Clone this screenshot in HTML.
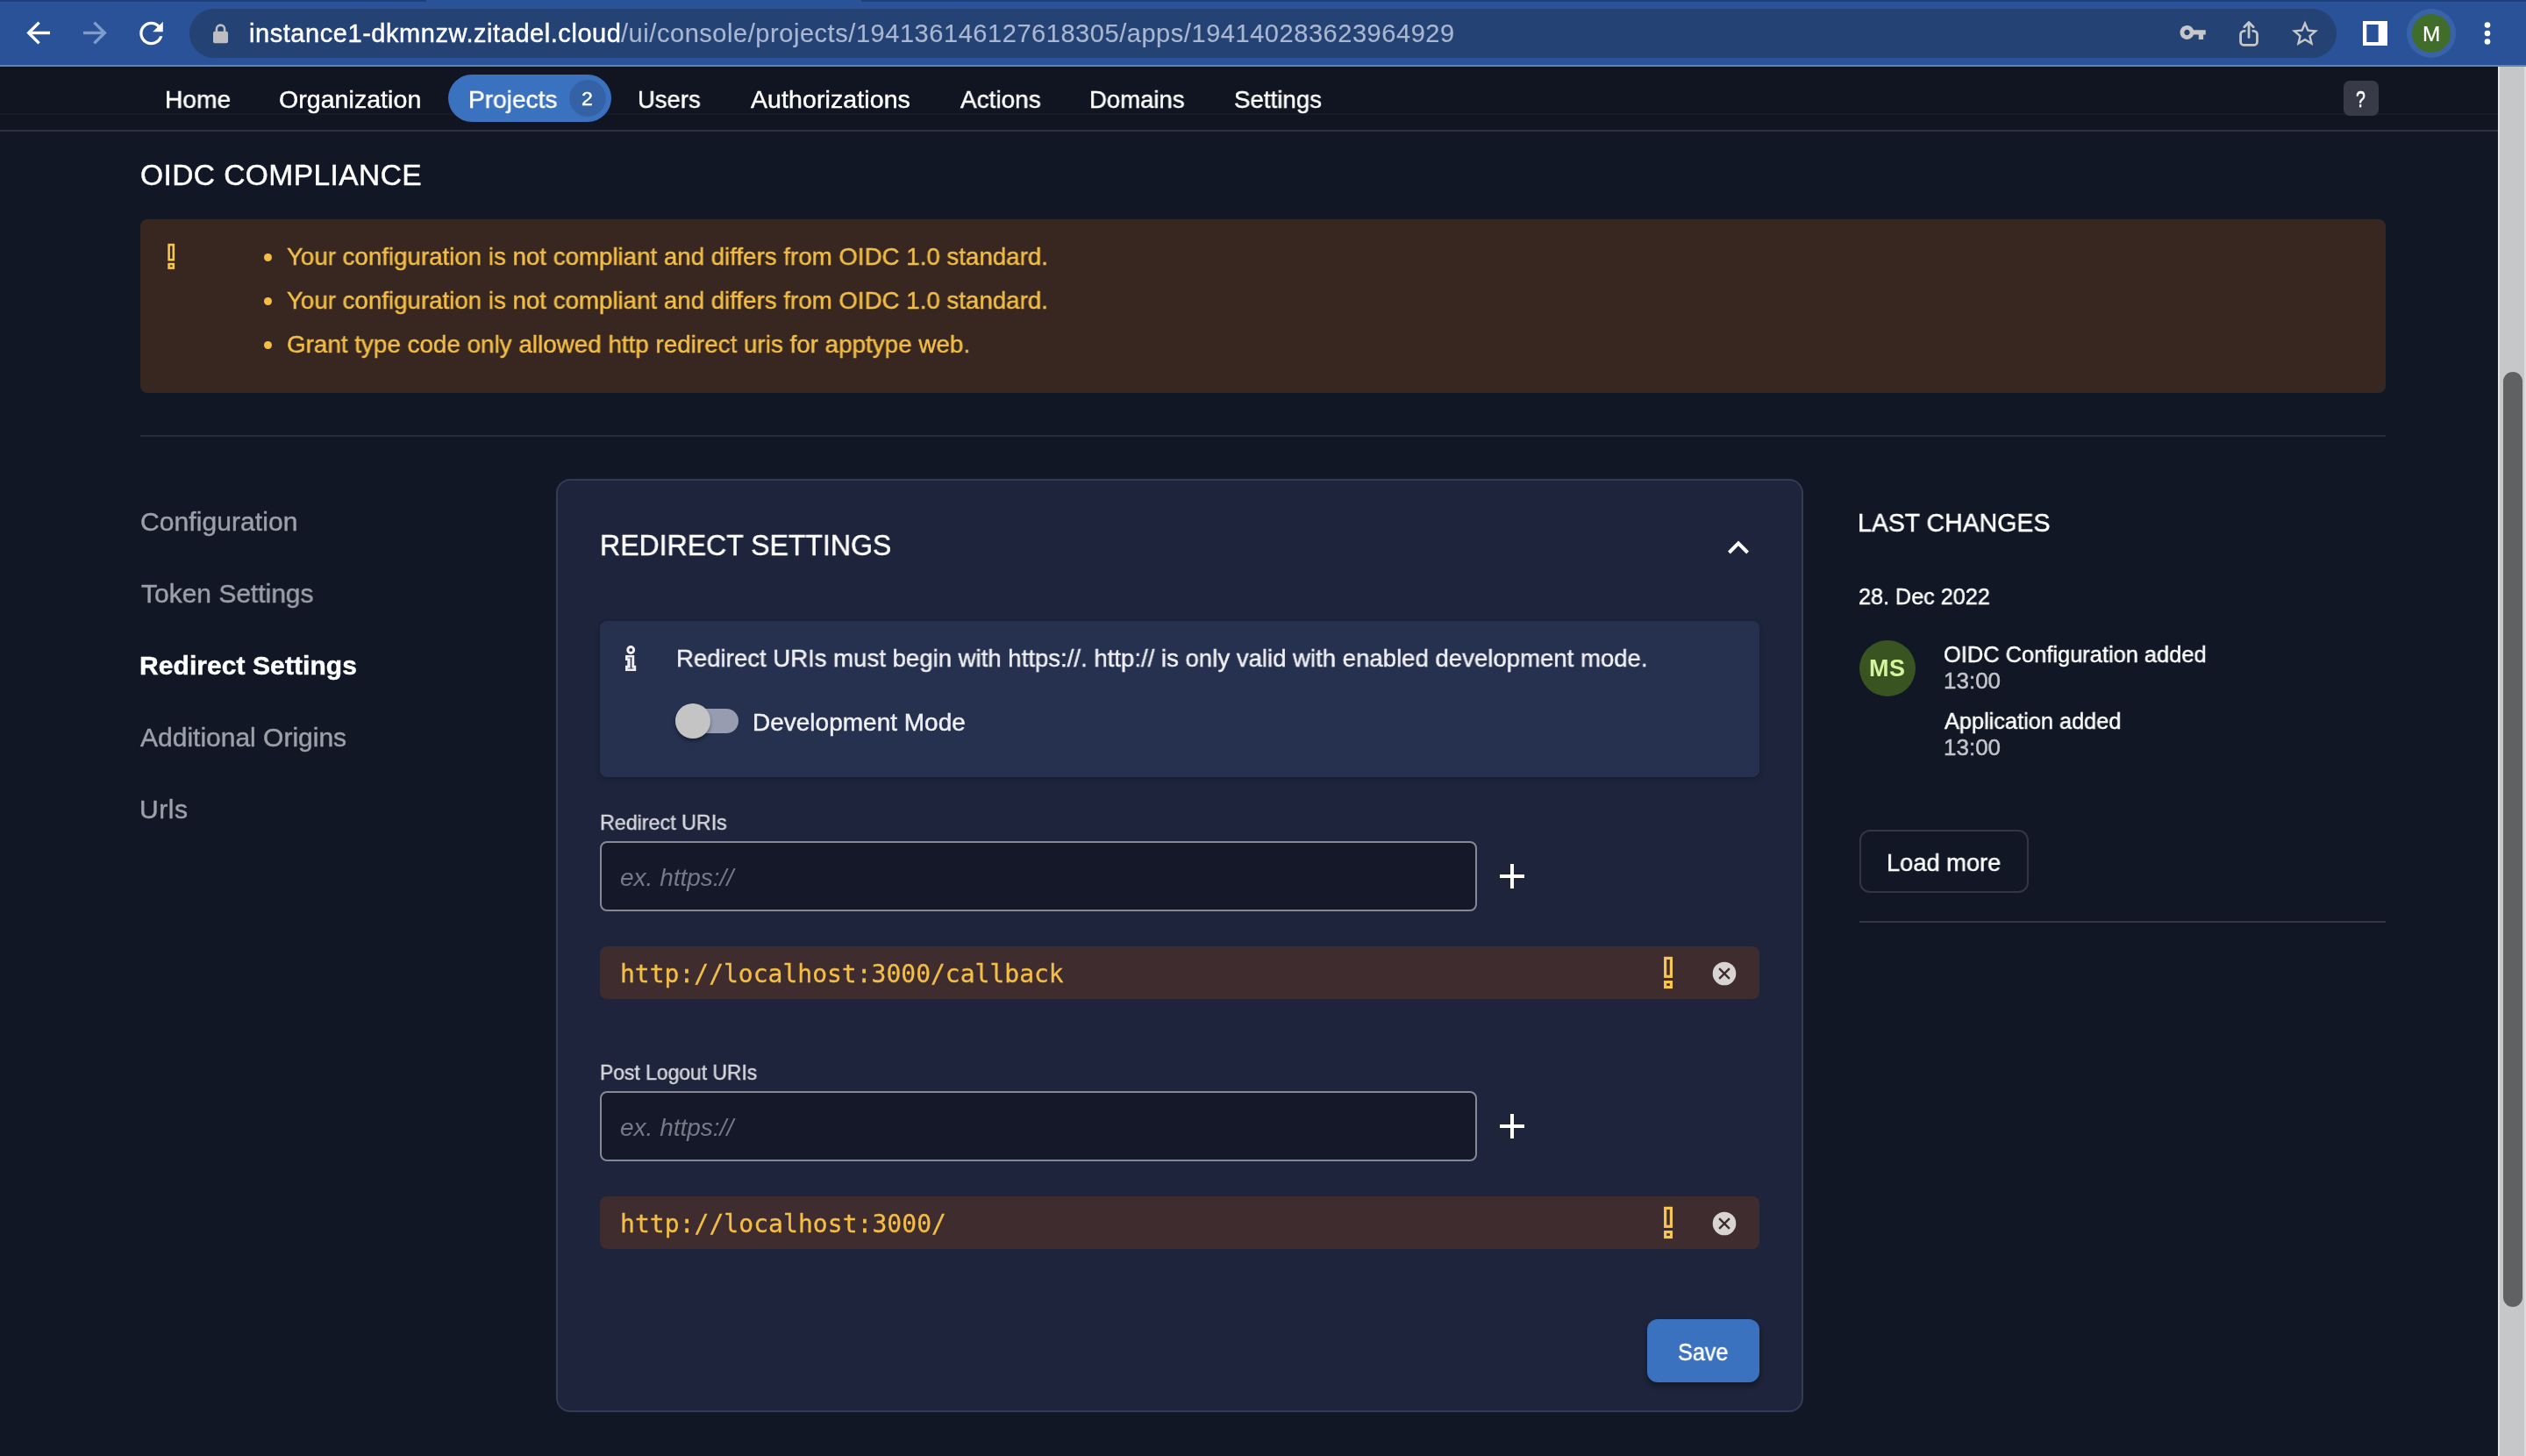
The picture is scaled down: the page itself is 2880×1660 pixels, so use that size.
<!DOCTYPE html>
<html lang="en">
<head>
<meta charset="utf-8">
<title>ZITADEL Console – Redirect Settings</title>
<style>
html,body{margin:0;padding:0;background:#111725;}
body{width:2880px;height:1660px;overflow:hidden;position:relative;font-family:"Liberation Sans",sans-serif;}
#root{position:absolute;left:0;top:0;width:2880px;height:1660px;overflow:hidden;background:#111725;}
header,nav,main,section,aside,footer{position:absolute;left:0;top:0;width:0;height:0;display:block;}
.a{position:absolute;box-sizing:border-box;}
.t{will-change:transform;position:absolute;margin:0;padding:0;white-space:pre;line-height:1;font-weight:400;transform-origin:0 0;text-decoration:none;font-family:"Liberation Sans",sans-serif;}
.m{font-family:"DejaVu Sans Mono","Liberation Mono",monospace;}
svg{position:absolute;overflow:visible;}
</style>
</head>
<body>
<div id="root">

<!-- ===== browser chrome (toolbar + omnibox) ===== -->
<header id="browser-toolbar">
<div class="a" style="left:0;top:0;width:2880px;height:76px;background:#295299;"></div>
<div class="a" style="left:0;top:0;width:2880px;height:2px;background:#1f3f78;"></div>
<div class="a" style="left:486px;top:0;width:496px;height:2px;background:#295299;"></div>
<div class="a" style="left:0;top:74px;width:2880px;height:2px;background:#5c84bf;"></div>
<div class="a" id="omnibox" style="left:216px;top:10px;width:2448px;height:56px;border-radius:28px;background:#244274;"></div>
<svg class="a" style="left:0;top:0" width="2880" height="76" viewBox="0 0 2880 76">
<!-- back -->
<g fill="none" stroke="#ffffff" stroke-width="3.4" stroke-linecap="butt" stroke-linejoin="miter">
<path d="M57 37.5H34"/><path d="M44.6 25.6L32.7 37.5L44.6 49.4"/>
</g>
<!-- forward -->
<g fill="none" stroke="#7f9ccf" stroke-width="3.4" stroke-linecap="butt" stroke-linejoin="miter">
<path d="M95 37.5H118"/><path d="M107.4 25.6L119.3 37.5L107.4 49.4"/>
</g>
<!-- reload -->
<g transform="translate(152.6,18.1) scale(1.66)" fill="#ffffff">
<path d="M17.65 6.35C16.2 4.9 14.21 4 12 4c-4.42 0-7.99 3.58-7.99 8s3.57 8 7.99 8c3.73 0 6.84-2.55 7.73-6h-2.08c-.82 2.33-3.04 4-5.65 4-3.31 0-6-2.69-6-6s2.69-6 6-6c1.66 0 3.14.69 4.22 1.78L13 11h7V4l-2.35 2.35z"/>
</g>
<!-- lock -->
<rect x="243" y="35.8" width="17" height="13.4" rx="2" fill="#bdbec0"/>
<path d="M246.9 37V33.2a4.6 4.6 0 0 1 9.2 0V37" fill="none" stroke="#bdbec0" stroke-width="2.6"/>
<!-- key -->
<g transform="translate(2484.2,21.0) scale(1.33)" fill="#c6c7c9">
<path fill-rule="evenodd" d="M12.65 10C11.83 7.67 9.61 6 7 6c-3.31 0-6 2.69-6 6s2.69 6 6 6c2.61 0 4.83-1.67 5.65-4H17v4h4v-4h2v-4H12.65zM7 14.4c-1.3 0-2.4-1.1-2.4-2.4S5.7 9.600 7 9.600s2.400 1.100 2.400 2.400-1.100 2.400-2.400 2.400z"/>
</g>
<!-- share -->
<g fill="none" stroke="#c6c7c9" stroke-width="2.8" stroke-linecap="round" stroke-linejoin="round">
<path d="M2559.3 35.3H2558.6a4 4 0 0 0 -4 4V47.4a4 4 0 0 0 4 4H2569.5a4 4 0 0 0 4 -4V39.3a4 4 0 0 0 -4 -4H2568.8"/>
<path d="M2564 42.6V26.2"/><path d="M2558.8 30.8L2564 25.6L2569.2 30.8"/>
</g>
<!-- star -->
<g transform="translate(2610,20.6) scale(1.5)" fill="#c6c7c9">
<path d="M22 9.24l-7.19-.62L12 2 9.19 8.63 2 9.24l5.46 4.73L5.82 21 12 17.27 18.18 21l-1.63-7.03L22 9.240zM12 15.4l-3.76 2.270 1-4.280-3.320-2.880 4.380-.38L12 6.100l1.710 4.040 4.380.38-3.320 2.880 1 4.280L12 15.400z"/>
</g>
<!-- side panel -->
<rect x="2694" y="24" width="28" height="28" fill="#ffffff"/>
<rect x="2698.3" y="28" width="13.4" height="20" fill="#2a5298"/>
<!-- avatar -->
<circle cx="2772" cy="38" r="28" fill="#3863a9"/>
<circle cx="2772" cy="38" r="22" fill="#416d2b"/>
<!-- dots -->
<circle cx="2836" cy="28.5" r="3.3" fill="#fff"/><circle cx="2836" cy="38" r="3.3" fill="#fff"/><circle cx="2836" cy="47.5" r="3.3" fill="#fff"/>
</svg>

<span class="t" style="top:24px;font-size:29px;color:#ffffff;-webkit-text-stroke:0.45px #ffffff;left:284.00px;letter-spacing:0.555px;">instance1-dkmnzw.zitadel.cloud</span>
<span class="t" style="top:24px;font-size:29px;color:#a9b7d1;-webkit-text-stroke:0.15px #a9b7d1;left:707.50px;letter-spacing:0.552px;">/ui/console/projects/194136146127618305/apps/194140283623964929</span>
<span class="t" style="top:28px;font-size:23px;color:#ffffff;-webkit-text-stroke:0.2px #ffffff;left:2761.94px;transform:scaleX(1.0588);">M</span>
</header>

<!-- ===== console top navigation ===== -->
<nav id="console-nav">
<div class="a" style="left:0;top:76px;width:2848px;height:74px;background:#111522;"></div>
<div class="a" style="left:0;top:129px;width:2848px;height:2px;background:#171b28;"></div>
<div class="a" style="left:0;top:148px;width:2848px;height:2px;background:#2e3240;"></div>
<div class="a" style="left:511px;top:85px;width:186px;height:54px;border-radius:27px;background:#3b72c0;"></div>
<div class="a" style="left:649px;top:91px;width:42px;height:42px;border-radius:21px;background:#3562a7;"></div>
<div class="a" style="left:2672px;top:92px;width:40px;height:40px;border-radius:7px;background:#383a47;"></div>
<a class="t" style="top:99px;font-size:28.5px;color:#fff;-webkit-text-stroke:0.45px #fff;left:187.72px;transform:scaleX(0.9881);">Home</a>
<a class="t" style="top:99px;font-size:28.5px;color:#fff;-webkit-text-stroke:0.45px #fff;left:318.00px;letter-spacing:0.060px;">Organization</a>
<a class="t" style="top:99px;font-size:28.5px;color:#fff;-webkit-text-stroke:0.45px #fff;left:534.33px;transform:scaleX(0.9851);">Projects</a>
<span class="t" style="top:102px;font-size:22px;color:#fff;-webkit-text-stroke:0.45px #fff;left:663.45px;transform:scaleX(1.0455);">2</span>
<a class="t" style="top:99px;font-size:28.5px;color:#fff;-webkit-text-stroke:0.45px #fff;left:727.37px;transform:scaleX(0.9630);">Users</a>
<a class="t" style="top:99px;font-size:28.5px;color:#fff;-webkit-text-stroke:0.45px #fff;left:855.60px;letter-spacing:0.096px;">Authorizations</a>
<a class="t" style="top:99px;font-size:28.5px;color:#fff;-webkit-text-stroke:0.45px #fff;left:1094.70px;transform:scaleX(0.9817);">Actions</a>
<a class="t" style="top:99px;font-size:28.5px;color:#fff;-webkit-text-stroke:0.45px #fff;left:1242.47px;transform:scaleX(0.9655);">Domains</a>
<a class="t" style="top:99px;font-size:28.5px;color:#fff;-webkit-text-stroke:0.45px #fff;left:1407.33px;transform:scaleX(0.9712);">Settings</a>
<span class="t" style="top:101px;font-size:25px;color:#ffffff;-webkit-text-stroke:0.7px #ffffff;left:2686.42px;transform:scaleX(0.7833);">?</span>
</nav>

<!-- ===== page scrollbar ===== -->
<div class="a" style="left:2848px;top:76px;width:32px;height:1584px;background:#c6c7c9;border-left:2px solid #e4e4e5;border-right:2px solid #dcdcde;"></div>
<div class="a" style="left:2854px;top:424px;width:22px;height:1066px;border-radius:11px;background:#606163;"></div>

<main id="app-detail">
<!-- ===== OIDC compliance ===== -->
<section id="oidc-compliance">
<div class="a" style="left:160px;top:250px;width:2560px;height:198px;border-radius:8px;background:#382721;"></div>
<div class="a" style="left:300.7px;top:288.6px;width:9.6px;height:9.6px;border-radius:4.8px;background:#f4be45;"></div>
<div class="a" style="left:300.7px;top:338.6px;width:9.6px;height:9.6px;border-radius:4.8px;background:#f4be45;"></div>
<div class="a" style="left:300.7px;top:388.6px;width:9.6px;height:9.6px;border-radius:4.8px;background:#f4be45;"></div>
<svg class="a" style="left:0;top:0" width="2880" height="1660" viewBox="0 0 2880 1660">
<!-- warn icon in compliance box -->
<g fill="none" stroke="#f8c64e" stroke-width="2.6">
<rect x="192.6" y="279.1" width="5.2" height="17.1"/>
<rect x="192.6" y="301.1" width="5.2" height="4.5"/>
</g>
</svg>

<h2 class="t" style="top:183px;font-size:33.5px;color:#fff;-webkit-text-stroke:0.45px #fff;left:159.70px;letter-spacing:0.434px;">OIDC COMPLIANCE</h2>
<p class="t" style="top:279px;font-size:28px;color:#f4be45;-webkit-text-stroke:0.45px #f4be45;left:326.50px;transform:scaleX(0.9887);">Your configuration is not compliant and differs from OIDC 1.0 standard.</p>
<p class="t" style="top:329px;font-size:28px;color:#f4be45;-webkit-text-stroke:0.45px #f4be45;left:326.50px;transform:scaleX(0.9887);">Your configuration is not compliant and differs from OIDC 1.0 standard.</p>
<p class="t" style="top:379px;font-size:28px;color:#f4be45;-webkit-text-stroke:0.45px #f4be45;left:326.51px;transform:scaleX(0.9932);">Grant type code only allowed http redirect uris for apptype web.</p>
<div class="a" style="left:160px;top:496px;width:2560px;height:2px;background:#272c3e;"></div>
</section>

<!-- ===== left section menu ===== -->
<nav id="section-menu">
<a class="t" style="top:580px;font-size:30px;color:#9d9fa9;-webkit-text-stroke:0.45px #9d9fa9;left:159.70px;letter-spacing:0.078px;">Configuration</a>
<a class="t" style="top:662px;font-size:30px;color:#9d9fa9;-webkit-text-stroke:0.45px #9d9fa9;left:160.50px;transform:scaleX(0.9985);">Token Settings</a>
<a class="t" style="top:744px;font-size:30px;color:#fff;font-weight:700;-webkit-text-stroke:0.45px #fff;left:158.80px;letter-spacing:0.073px;">Redirect Settings</a>
<a class="t" style="top:826px;font-size:30px;color:#9d9fa9;-webkit-text-stroke:0.45px #9d9fa9;left:160.00px;">Additional Origins</a>
<a class="t" style="top:908px;font-size:30px;color:#9d9fa9;-webkit-text-stroke:0.45px #9d9fa9;left:158.50px;letter-spacing:0.560px;">Urls</a>
</nav>

<!-- ===== redirect settings card ===== -->
<section id="redirect-settings">
<div class="a" style="left:634px;top:546px;width:1422px;height:1064px;border-radius:16px;background:#1d243b;border:2px solid #323c52;"></div>
<div class="a" style="left:684px;top:708px;width:1322px;height:178px;border-radius:8px;background:#263150;box-shadow:0 2px 6px rgba(0,0,0,.22);"></div>
<div class="a" style="left:770px;top:808px;width:72px;height:28px;border-radius:14px;background:#979cb0;"></div>
<div class="a" style="left:770px;top:802px;width:40px;height:40px;border-radius:20px;background:#c4c4c4;box-shadow:0 3px 4px rgba(0,0,0,.35);"></div>
<div class="a" style="left:684px;top:959px;width:1000px;height:80px;border-radius:8px;background:#141829;border:2px solid #868994;"></div>
<div class="a" style="left:684px;top:1079px;width:1322px;height:60px;border-radius:8px;background:#3e2c2e;"></div>
<div class="a" style="left:684px;top:1244px;width:1000px;height:80px;border-radius:8px;background:#141829;border:2px solid #868994;"></div>
<div class="a" style="left:684px;top:1364px;width:1322px;height:60px;border-radius:8px;background:#3e2c2e;"></div>
<div class="a" style="left:1878px;top:1504px;width:128px;height:72px;border-radius:12px;background:#3b72c0;box-shadow:0 4px 6px rgba(0,0,0,.35);"></div>
<svg class="a" style="left:0;top:0" width="2880" height="1660" viewBox="0 0 2880 1660">
<!-- info icon -->
<circle cx="719.2" cy="741" r="3.45" fill="none" stroke="#f0f0f3" stroke-width="2.9"/>
<path d="M713 747H723.2V758.800H725.2V765H713V758.800H715.3V753H713Z" fill="#f0f0f3"/>
<path d="M718.700 749.600H720.300V762.200H718.700Z" fill="#263150"/><path d="M715.800 749.500H720.300V750.500H715.800Z M715.800 761.400H722.400V762.400H715.800Z" fill="#263150" opacity="0.75"/>
<!-- chevron -->
<g transform="translate(1958,600.6) scale(2)" fill="#ffffff"><path d="M12 8l-6 6 1.410 1.410L12 10.830l4.590 4.580L18 14z"/></g>
<!-- plus -->
<g transform="translate(1700,975) scale(2)" fill="#ffffff"><path d="M19 13h-6v6h-2v-6H5v-2h6V5h2v6h6v2z"/></g>
<g transform="translate(1700,1260) scale(2)" fill="#ffffff"><path d="M19 13h-6v6h-2v-6H5v-2h6V5h2v6h6v2z"/></g>
<!-- row icons -->
<g id="rowic">
<g fill="none" stroke="#f8c64e" stroke-width="3.2">
<rect x="1898.650" y="1092.400" width="6.750" height="20.900"/>
<rect x="1898.650" y="1119.600" width="6.750" height="5.900"/>
</g>
<circle cx="1966" cy="1110" r="13.300" fill="#d8d4d4"/>
<path d="M1960.100 1104.100L1971.900 1115.900M1971.900 1104.100L1960.100 1115.900" stroke="#3e2c2e" stroke-width="2.400" fill="none"/>
</g>
<g transform="translate(0,285)">
<g fill="none" stroke="#f8c64e" stroke-width="3.2">
<rect x="1898.650" y="1092.400" width="6.750" height="20.900"/>
<rect x="1898.650" y="1119.600" width="6.750" height="5.900"/>
</g>
<circle cx="1966" cy="1110" r="13.300" fill="#d8d4d4"/>
<path d="M1960.100 1104.100L1971.900 1115.900M1971.900 1104.100L1960.100 1115.900" stroke="#3e2c2e" stroke-width="2.400" fill="none"/>
</g>
</svg>

<h2 class="t" style="top:605px;font-size:33.5px;color:#fff;-webkit-text-stroke:0.45px #fff;left:684.29px;transform:scaleX(0.9567);">REDIRECT SETTINGS</h2>
<p class="t" style="top:737px;font-size:28px;color:#f0f0f3;-webkit-text-stroke:0.45px #f0f0f3;left:770.73px;transform:scaleX(0.9843);">Redirect URIs must begin with https://. http:// is only valid with enabled development mode.</p>
<label class="t" style="top:810px;font-size:28px;color:#f0f0f3;-webkit-text-stroke:0.45px #f0f0f3;left:858.00px;transform:scaleX(0.9999);">Development Mode</label>
<label class="t" style="top:926px;font-size:24px;color:#d5d6dc;-webkit-text-stroke:0.45px #d5d6dc;left:684.03px;transform:scaleX(0.9692);">Redirect URIs</label>
<span class="t" style="top:987px;font-size:28px;color:#767986;font-style:italic;left:707.00px;">ex. https://</span>
<code class="t m" style="top:1097px;font-size:28px;color:#f4be45;-webkit-text-stroke:0.3px #f4be45;left:706.50px;transform:scaleX(0.9993);">http://localhost:3000/callback</code>
<label class="t" style="top:1211px;font-size:24px;color:#d5d6dc;-webkit-text-stroke:0.45px #d5d6dc;left:684.05px;transform:scaleX(0.9530);">Post Logout URIs</label>
<span class="t" style="top:1272px;font-size:28px;color:#767986;font-style:italic;left:707.00px;">ex. https://</span>
<code class="t m" style="top:1382px;font-size:28px;color:#f4be45;-webkit-text-stroke:0.3px #f4be45;left:706.50px;letter-spacing:0.052px;">http://localhost:3000/</code>
<span class="t" style="top:1528px;font-size:28px;color:#fff;-webkit-text-stroke:0.45px #fff;left:1913.10px;transform:scaleX(0.8996);">Save</span>
</section>

<!-- ===== last changes ===== -->
<aside id="last-changes">
<div class="a" style="left:2120px;top:730px;width:64px;height:64px;border-radius:32px;background:#3a5421;"></div>
<div class="a" style="left:2120px;top:946px;width:193px;height:72px;border-radius:12px;border:2px solid #333645;"></div>
<div class="a" style="left:2120px;top:1050px;width:600px;height:2px;background:#343746;"></div>
<h2 class="t" style="top:582px;font-size:29px;color:#fff;-webkit-text-stroke:0.45px #fff;left:2118.44px;transform:scaleX(0.9817);">LAST CHANGES</h2>
<span class="t" style="top:667px;font-size:26px;color:#fff;-webkit-text-stroke:0.45px #fff;left:2119.03px;transform:scaleX(0.9686);">28. Dec 2022</span>
<span class="t" style="top:749px;font-size:27px;color:#d4f59b;font-weight:700;left:2131.30px;letter-spacing:0.509px;">MS</span>
<span class="t" style="top:733px;font-size:26px;color:#fff;-webkit-text-stroke:0.45px #fff;left:2215.82px;transform:scaleX(0.9778);">OIDC Configuration added</span>
<span class="t" style="top:763px;font-size:26px;color:#c4c5cb;-webkit-text-stroke:0.45px #c4c5cb;left:2216.00px;transform:scaleX(0.9999);">13:00</span>
<span class="t" style="top:809px;font-size:26px;color:#fff;-webkit-text-stroke:0.45px #fff;left:2217.00px;transform:scaleX(0.9744);">Application added</span>
<span class="t" style="top:839px;font-size:26px;color:#c4c5cb;-webkit-text-stroke:0.45px #c4c5cb;left:2216.00px;transform:scaleX(0.9999);">13:00</span>
<span class="t" style="top:970px;font-size:28px;color:#fff;-webkit-text-stroke:0.45px #fff;left:2150.75px;transform:scaleX(0.9734);">Load more</span>
</aside>
</main>

</div>
</body>
</html>
